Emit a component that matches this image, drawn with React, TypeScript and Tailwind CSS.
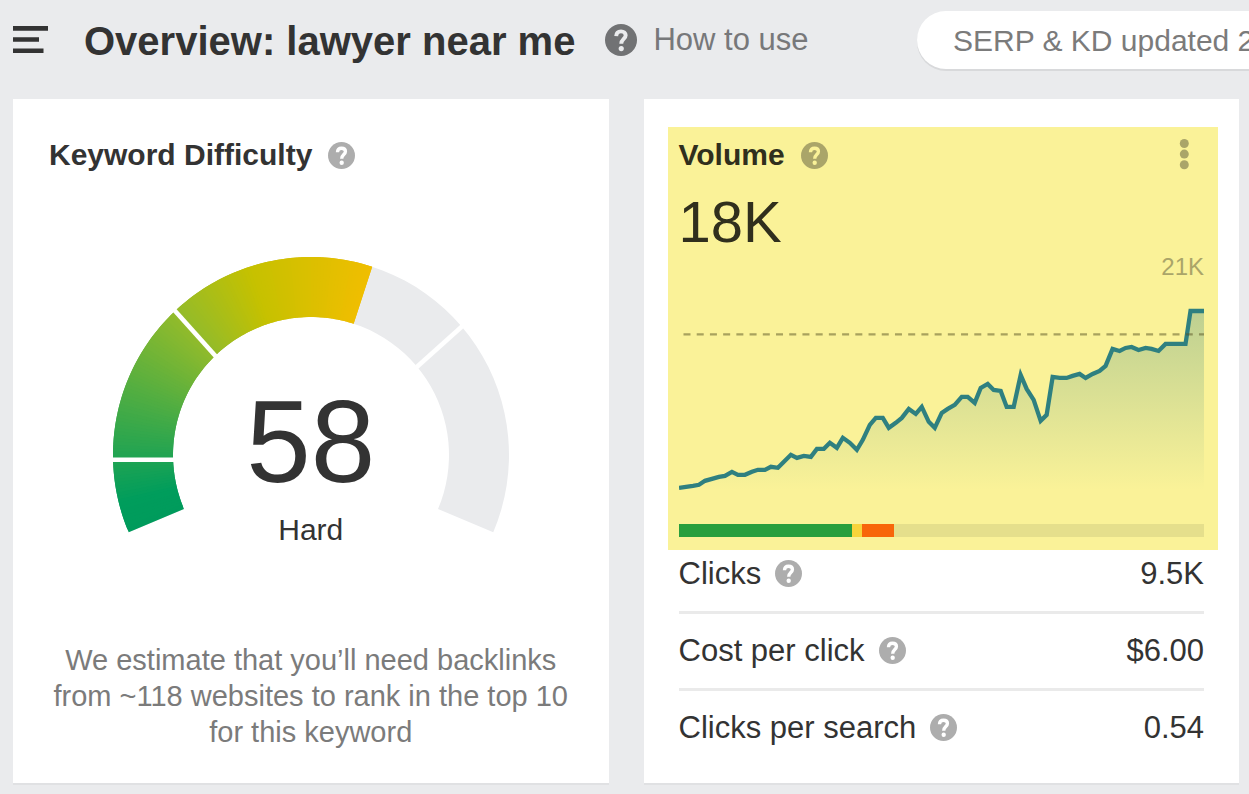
import React from "react";

const volumePoints: [number, number][] = [
  [0, 198], [7, 197], [14, 196], [20, 195], [26, 191], [33, 189], [40, 187],
  [46, 186], [53, 182], [59, 185], [66, 185], [73, 182], [79, 180], [86, 180],
  [92, 177], [99, 178], [105, 172], [112, 165], [118, 168], [125, 166],
  [132, 167], [138, 159], [145, 159], [151, 153], [158, 158], [164, 148],
  [171, 153], [178, 160], [184, 150], [191, 135], [197, 128], [204, 128],
  [210, 138], [217, 133], [223, 128], [230, 119], [237, 124], [243, 117],
  [250, 132], [256, 138], [263, 123], [269, 119], [276, 115], [283, 107],
  [289, 107], [296, 113], [302, 98], [309, 94], [315, 100], [322, 101],
  [328, 117], [335, 117], [342, 85], [348, 99], [355, 110], [362, 131],
  [368, 125], [374, 87], [381, 88], [388, 88], [394, 86], [401, 84],
  [407, 88], [414, 84], [421, 81], [427, 76], [434, 59], [441, 61], [447, 58],
  [453, 57], [460, 60], [467, 58], [473, 59], [480, 61], [487, 54], [493, 54],
  [507, 54], [512, 21], [526, 21],
];

const metrics = [
  { label: "Clicks", value: "9.5K" },
  { label: "Cost per click", value: "$6.00" },
  { label: "Clicks per search", value: "0.54" },
];

// gauge geometry, in the units of its viewBox
const CENTER = 198;
const OUTER = 198;
const INNER = 138;
const START = -203;
const END = 23;
const VALUE_END = -72;

const gaugeStops: [number, number[]][] = [
  [-203, [0, 155, 92]],
  [-194, [0, 157, 92]],
  [-180, [34, 164, 82]],
  [-134, [146, 187, 43]],
  [-108, [198, 193, 0]],
  [-72, [240, 190, 0]],
];

const polar = (radius: number, degrees: number) => {
  const a = (degrees * Math.PI) / 180;
  return `${CENTER + radius * Math.cos(a)} ${CENTER + radius * Math.sin(a)}`;
};

const ringPath = (from: number, to: number) => {
  const large = to - from > 180 ? 1 : 0;
  return `M${polar(OUTER, from)} A${OUTER} ${OUTER} 0 ${large} 1 ${polar(
    OUTER,
    to
  )} L${polar(INNER, to)} A${INNER} ${INNER} 0 ${large} 0 ${polar(
    INNER,
    from
  )} Z`;
};

const gaugeColor = (degrees: number) => {
  const last = gaugeStops.length - 1;
  let i = 0;
  while (i < last - 1 && degrees > gaugeStops[i + 1][0]) i++;
  const [a, from] = gaugeStops[i];
  const [b, to] = gaugeStops[i + 1];
  const t = Math.min(1, Math.max(0, (degrees - a) / (b - a)));
  return `rgb(${from.map((c, n) => Math.round(c + (to[n] - c) * t)).join(",")})`;
};

const slices = Array.from({ length: VALUE_END - START }, (_, i) => START + i);

const HelpIcon: React.FC<{ className: string }> = ({ className }) => (
  <svg viewBox="0 0 26 26" className={className} aria-hidden="true">
    <circle cx="13" cy="13" r="13" fill="currentColor" />
    <path
      d="M9.1 9.9C9.2 7.3 10.7 6 13 6C15.3 6 16.8 7.3 16.8 9.1C16.8 12.1 13.2 12.2 13.2 16.1"
      fill="none"
      stroke="var(--mark, #fff)"
      strokeWidth="3.2"
    />
    <circle cx="13.2" cy="20" r="2.1" fill="var(--mark, #fff)" />
  </svg>
);

const Gauge: React.FC = () => (
  <div className="relative mx-auto w-full max-w-[396px]">
    <svg viewBox="0 0 396 276" className="block w-full" aria-hidden="true">
      <path d={ringPath(START, END)} fill="#eaebed" />
      {slices.map((from) => (
        <path
          key={from}
          d={ringPath(from, Math.min(from + 2, VALUE_END))}
          fill={gaugeColor(from + 0.5)}
        />
      ))}
      <g stroke="#fff" strokeWidth="4.6">
        <path d="M-2 202.7H62" />
        <path d="M61 52.8L104.5 101.2" />
        <path d="M352 66.7L301 112.5" />
      </g>
    </svg>
    <div className="absolute inset-x-0 bottom-0 flex translate-y-[15px] flex-col items-center">
      <span className="text-[116px] leading-[112px]">58</span>
      <span className="mt-[14px] text-[30px] leading-9">Hard</span>
    </div>
  </div>
);

const VolumeChart: React.FC = () => {
  const line = volumePoints.map((p) => p.join(" ")).join("L");
  return (
    <svg viewBox="0 0 526 210" className="block w-full" aria-hidden="true">
      <defs>
        <linearGradient id="volume" x1="0" y1="20" x2="0" y2="200" gradientUnits="userSpaceOnUse">
          <stop offset="0" stopColor="#2f8080" stopOpacity="0.3" />
          <stop offset="1" stopColor="#2f8080" stopOpacity="0" />
        </linearGradient>
      </defs>
      <path d={`M${line}V200H0Z`} fill="url(#volume)" />
      <path d={`M${line}`} fill="none" stroke="#2f8080" strokeWidth="4.3" />
      <path d="M4.5 44.5H526" stroke="#555121" strokeOpacity="0.5" strokeWidth="2.3" strokeDasharray="7 6.23" />
    </svg>
  );
};

const App: React.FC = () => {
  return (
    <div className="min-h-screen overflow-hidden bg-[#eaebed] font-['Liberation_Sans',Arial,sans-serif] text-[#333]">
      <header className="flex h-[99px] items-start pl-[13px]">
        <button type="button" aria-label="Menu" className="mt-[26px] shrink-0">
          <svg viewBox="0 0 35 27" className="block h-[27px] w-[35px]" fill="#333">
            <path d="M0 0H35V4.8H0ZM0 11.2H26V15.8H0ZM0 22.4H30.5V27H0Z" />
          </svg>
        </button>
        <h1 className="mt-[17px] ml-9 shrink-0 text-[40px] leading-[48px] font-bold">
          Overview: lawyer near me
        </h1>
        <a href="#how-to-use" className="mt-[22px] ml-[30px] flex shrink-0 items-center gap-4 text-[31px] leading-9 text-[#77787a]">
          <HelpIcon className="size-8 text-[#717274] [--mark:#eaebed]" />
          How to use
        </a>
        <button type="button" className="mt-[11px] ml-auto h-[58px] w-[332px] shrink-0 overflow-hidden rounded-l-full bg-white pl-9 text-left text-[30px] whitespace-nowrap text-[#7b7b7b] shadow-[0_2px_0_#d8d9db]">
          SERP &amp; KD updated 2
        </button>
      </header>

      <main className="grid grid-cols-2 gap-[35px] pr-[10px] pb-[11px] pl-[13px]">
        <section className="flex flex-col bg-white px-9 pt-[38px] pb-[33px] shadow-[0_2px_0_#e0e1e3]">
          <h2 className="flex items-center gap-4 text-[30px] leading-9 font-bold">
            Keyword Difficulty
            <HelpIcon className="size-[27px] text-[#adadad]" />
          </h2>
          <div className="mt-[84px]">
            <Gauge />
          </div>
          <p className="mt-auto text-center text-[29px] leading-9 text-[#7b7b7b]">
            We estimate that you’ll need backlinks from ~118 websites to rank in the top 10 for this keyword
          </p>
        </section>

        <section className="bg-white pt-7 pr-[21px] pb-[37px] pl-6 shadow-[0_2px_0_#e0e1e3]">
          <div className="bg-[#faf298] pt-[10px] pr-[14px] pb-[13px] pl-[11px] text-[#302f1d]">
            <div className="flex items-center justify-between">
              <h2 className="flex items-center gap-4 text-[30px] leading-9 font-bold">
                Volume
                <HelpIcon className="size-[27px] text-[#aaa569] [--mark:#faf298]" />
              </h2>
              <button type="button" aria-label="More options" className="pr-[15px]">
                <svg viewBox="0 0 10 32" className="block h-8 w-[10px]" fill="#aaa569">
                  <circle cx="5.3" cy="4.5" r="4.5" />
                  <circle cx="5.3" cy="15.1" r="4.5" />
                  <circle cx="5.3" cy="25.8" r="4.5" />
                </svg>
              </button>
            </div>
            <div className="mt-4 text-[58px] leading-[66px]">18K</div>
            <div className="text-right text-2xl leading-6 text-[#aaa569]">21K</div>
            <div className="mt-[11px]">
              <VolumeChart />
            </div>
            <div className="mt-6 flex h-[13px] bg-[#e5df8c]">
              <div className="w-[33%] bg-[#289f3d]" />
              <div className="w-[2%] bg-[#f8d43a]" />
              <div className="w-[6%] bg-[#f8660a]" />
            </div>
          </div>
          <dl className="pr-[14px] pl-[11px] text-[31px] leading-9">
            {metrics.map(({ label, value }) => (
              <div key={label} className="flex items-center justify-between border-b-3 border-[#eaeaea] py-[19px] first:pt-[6px] last:border-b-0 last:pb-0">
                <dt className="flex items-center gap-[14px]">
                  {label}
                  <HelpIcon className="size-[27px] text-[#adadad]" />
                </dt>
                <dd>{value}</dd>
              </div>
            ))}
          </dl>
        </section>
      </main>
    </div>
  );
};

export default App;
